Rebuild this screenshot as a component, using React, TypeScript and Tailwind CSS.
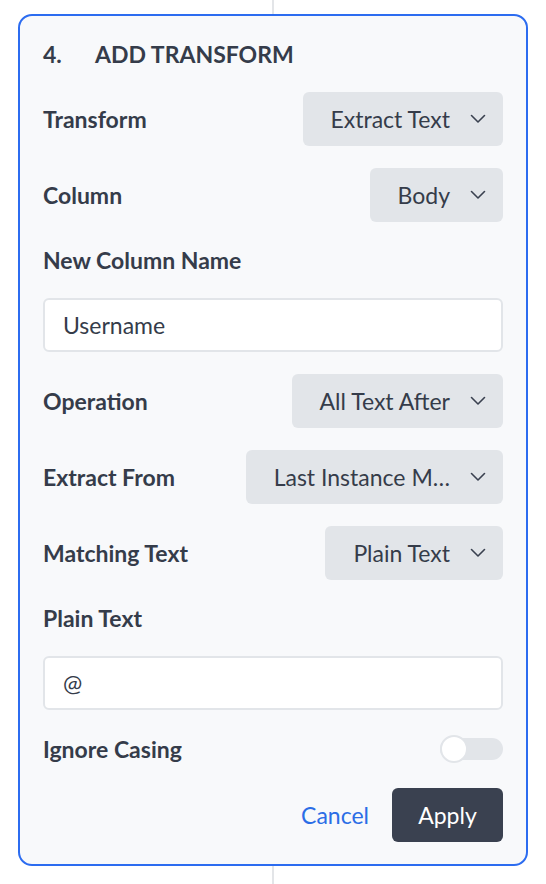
import React from "react";

const font = { fontFamily: "Lato, 'Noto Sans', sans-serif" };

function Chevron() {
  return (
    <svg width="16" height="10" viewBox="0 0 16 10" className="shrink-0">
      <polyline
        points="1.5,1.5 8,8 14.5,1.5"
        fill="none"
        stroke="#3a4150"
        strokeWidth="1.6"
        strokeLinecap="round"
        strokeLinejoin="round"
      />
    </svg>
  );
}

function Select({ value }: { value: string }) {
  return (
    <div className="flex h-[54px] items-center gap-[20px] rounded-[6px] bg-[#e2e5e9] pl-[28px] pr-[17px]">
      <span className="whitespace-nowrap text-[23px] text-[#353c4a]">{value}</span>
      <Chevron />
    </div>
  );
}

function SelectRow({ label, value }: { label: string; value: string }) {
  return (
    <div className="flex items-center justify-between">
      <span className="text-[23px] font-bold text-[#353c4a]">{label}</span>
      <Select value={value} />
    </div>
  );
}

function Label({ children }: { children: React.ReactNode }) {
  return (
    <div className="flex h-[32px] items-center text-[23px] font-bold text-[#353c4a]">
      {children}
    </div>
  );
}

function TextInput({ value }: { value: string }) {
  return (
    <div className="flex h-[54px] items-center rounded-[6px] border-2 border-[#e2e5e9] bg-white px-[18px] text-[23px] text-[#353c4a]">
      {value}
    </div>
  );
}

export default function App() {
  return (
    <div className="flex h-[884px] w-full flex-col items-center bg-white" style={font}>
      <div className="h-[14px] w-[2px] bg-[#e3e5e8]" />
      <div className="flex w-[510px] flex-col gap-[22px] rounded-[14px] border-2 border-[#2c6cf0] bg-[#f8f9fb] px-[23px] pt-[22px] pb-[22px]">
        {/* Header */}
        <div className="flex h-[32px] items-center text-[23px] font-bold text-[#353c4a]">
          <span className="w-[52px]">4.</span>
          <span>ADD TRANSFORM</span>
        </div>

        <SelectRow label="Transform" value="Extract Text" />
        <SelectRow label="Column" value="Body" />

        <Label>New Column Name</Label>
        <TextInput value="Username" />

        <SelectRow label="Operation" value="All Text After" />
        <SelectRow label="Extract From" value="Last Instance M…" />
        <SelectRow label="Matching Text" value="Plain Text" />

        <Label>Plain Text</Label>
        <TextInput value="@" />

        {/* Ignore casing toggle */}
        <div className="flex h-[34px] items-center justify-between">
          <span className="text-[23px] font-bold text-[#353c4a]">Ignore Casing</span>
          <div className="relative h-[22px] w-[63px] rounded-full bg-[#e2e5e9]">
            <div className="absolute left-0 top-1/2 h-[28px] w-[28px] -translate-y-1/2 rounded-full border-2 border-[#e2e5e9] bg-white" />
          </div>
        </div>

        {/* Actions */}
        <div className="flex items-center justify-end gap-[23px]">
          <button className="text-[23px] text-[#2b6de6]">Cancel</button>
          <button className="flex h-[54px] w-[111px] items-center justify-center rounded-[6px] bg-[#3a4150] text-[23px] text-white">
            Apply
          </button>
        </div>
      </div>
      <div className="h-[18px] w-[2px] bg-[#e3e5e8]" />
    </div>
  );
}
